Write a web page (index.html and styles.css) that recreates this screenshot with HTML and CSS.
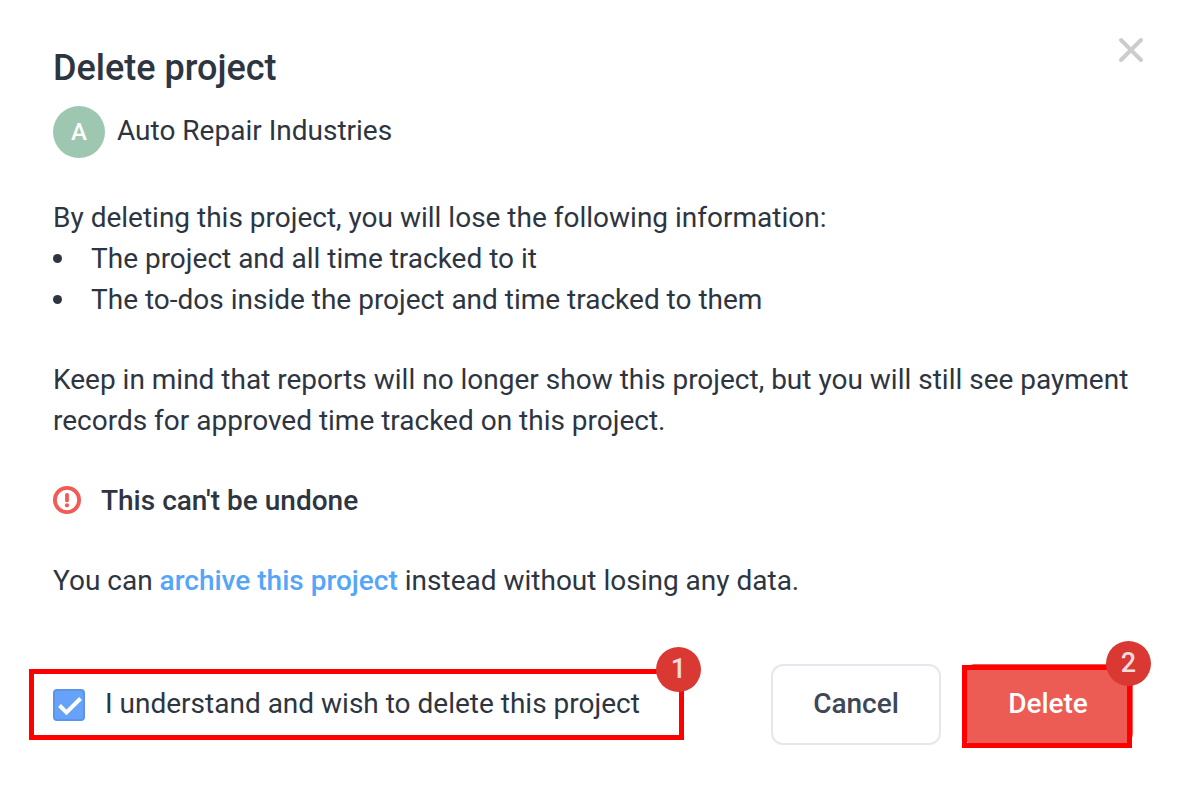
FILE: index.html
```html
<!DOCTYPE html>
<html lang="en">
<head>
  <meta charset="UTF-8" />
  <meta name="viewport" content="width=device-width, initial-scale=1.0" />
  <title>Delete project</title>
  <link rel="stylesheet" href="styles.css">
</head>
<body>
  <main class="dialog" role="dialog" aria-labelledby="dialogTitle">
    <header class="dialog-header">
      <h1 id="dialogTitle">Delete project</h1>
      <button type="button" class="close-button" aria-label="Close">
        <svg width="26" height="26" viewBox="0 0 26 26" fill="none" stroke="#ccc" stroke-width="4" stroke-linecap="round">
          <path d="M3 3L23 23M23 3L3 23" />
        </svg>
      </button>
    </header>

    <div class="project">
      <span class="avatar">A</span>
      <span class="project-name">Auto Repair Industries</span>
    </div>

    <div class="dialog-body">
      <div class="info">
        <p>By deleting this project, you will lose the following information:</p>
        <ul>
          <li>The project and all time tracked to it</li>
          <li>The to-dos inside the project and time tracked to them</li>
        </ul>
      </div>
      <p>Keep in mind that reports will no longer show this project, but you will still see payment records for approved time tracked on this project.</p>
      <p class="warning">
        <svg width="28" height="30" viewBox="0 0 28 30" fill="none" stroke="#f25b55" stroke-linecap="round">
          <circle cx="14" cy="14" r="12.1" stroke-width="3.8" />
          <path d="M14 8.8V14.4" stroke-width="3.8" />
          <circle cx="14" cy="19.3" r="2.1" fill="#f25b55" stroke="none" />
        </svg>
        <strong>This can't be undone</strong>
      </p>
      <p>You can <a href="#archive">archive this project</a> instead without losing any data.</p>
    </div>

    <footer class="dialog-footer">
      <div class="confirm">
        <input type="checkbox" id="understand" checked>
        <label for="understand">I understand and wish to delete this project</label>
        <span class="frame frame-confirm"><span class="step">1</span></span>
      </div>
      <div class="actions">
        <button type="button" class="button">Cancel</button>
        <div class="action-marked">
          <button type="button" class="button button-danger">Delete</button>
          <span class="frame frame-delete"><span class="step">2</span></span>
        </div>
      </div>
    </footer>
  </main>
</body>
</html>
```
FILE: styles.css
```css
* {
  box-sizing: border-box;
}

body {
  margin: 0;
  background: #fff;
  color: #2d3541;
  font-family: Roboto, "Liberation Sans", sans-serif;
  font-size: 28px;
  line-height: 41px;
}

h1, p, ul {
  margin: 0;
}

.dialog {
  padding: 36px 51px 48px 53px;
}

.dialog-header {
  display: flex;
  justify-content: space-between;
  align-items: flex-start;
}

h1 {
  font-size: 36px;
  line-height: 64px;
  font-weight: 500;
}

.close-button {
  display: flex;
  padding: 0;
  margin: 1px -11px 0 0;
  border: 0;
  background: none;
  cursor: pointer;
}

.project {
  display: flex;
  align-items: center;
  gap: 12px;
  margin-top: 6px;
}

.project-name {
  padding-bottom: 4px;
}

.avatar {
  width: 52px;
  height: 52px;
  border-radius: 50%;
  background: #9dc7b1;
  color: #fff;
  font-size: 24px;
  line-height: 52px;
  font-weight: 500;
  text-align: center;
}

.dialog-body {
  display: flex;
  flex-direction: column;
  gap: 39px;
  margin-top: 39px;
}

ul {
  padding: 0;
  list-style: none;
}

li {
  display: flex;
  align-items: center;
  gap: 29px;
}

li::before {
  content: "";
  width: 9px;
  height: 9px;
  border-radius: 50%;
  background: #2d3541;
}

.warning {
  display: flex;
  align-items: center;
  gap: 20px;
}

strong, a {
  font-weight: 500;
}

a {
  color: #55a5f8;
  text-decoration: none;
}

.dialog-footer {
  display: flex;
  justify-content: space-between;
  align-items: center;
  margin-top: 63px;
}

.confirm {
  position: relative;
  display: flex;
  align-items: center;
  gap: 20px;
}

label {
  padding-bottom: 2px;
}

input[type="checkbox"] {
  appearance: none;
  width: 32px;
  height: 32px;
  margin: 0;
  border: 2px solid #5b95e8;
  border-radius: 4px;
  background: #66a2f9;
}

input[type="checkbox"]:checked {
  background: #66a2f9 url("data:image/svg+xml,%3Csvg xmlns='http://www.w3.org/2000/svg' viewBox='0 0 28 28'%3E%3Cpath d='M4.5 14.5L11.5 21.5L25.5 7.5' fill='none' stroke='white' stroke-width='4'/%3E%3C/svg%3E") center / 28px no-repeat;
}

.actions {
  display: flex;
  gap: 22px;
}

.action-marked {
  position: relative;
}

.button {
  display: block;
  width: 170px;
  height: 81px;
  padding: 0 0 2px;
  border: 2px solid #e4e8ee;
  border-radius: 12px;
  background: #fff;
  color: #3d4757;
  font: inherit;
  font-weight: 500;
  cursor: pointer;
}

.button-danger {
  border-color: #ec5b54;
  background: #ec5b54;
  color: #fff;
}

/* red callouts with step numbers */
.frame {
  position: absolute;
  border: 5px solid #f00;
  pointer-events: none;
}

.frame-confirm {
  inset: -14px -44px -14px -24px;
}

.frame-delete {
  inset: 1px 1px -3px -1px;
}

.step {
  position: absolute;
  top: -27px;
  right: -22px;
  width: 45px;
  height: 45px;
  border-radius: 50%;
  background: #da3832;
  color: #f3dcdc;
  font-size: 27px;
  line-height: 45px;
  font-weight: 500;
  text-align: center;
}

.frame-delete .step {
  top: -29px;
  right: -24px;
}
```
